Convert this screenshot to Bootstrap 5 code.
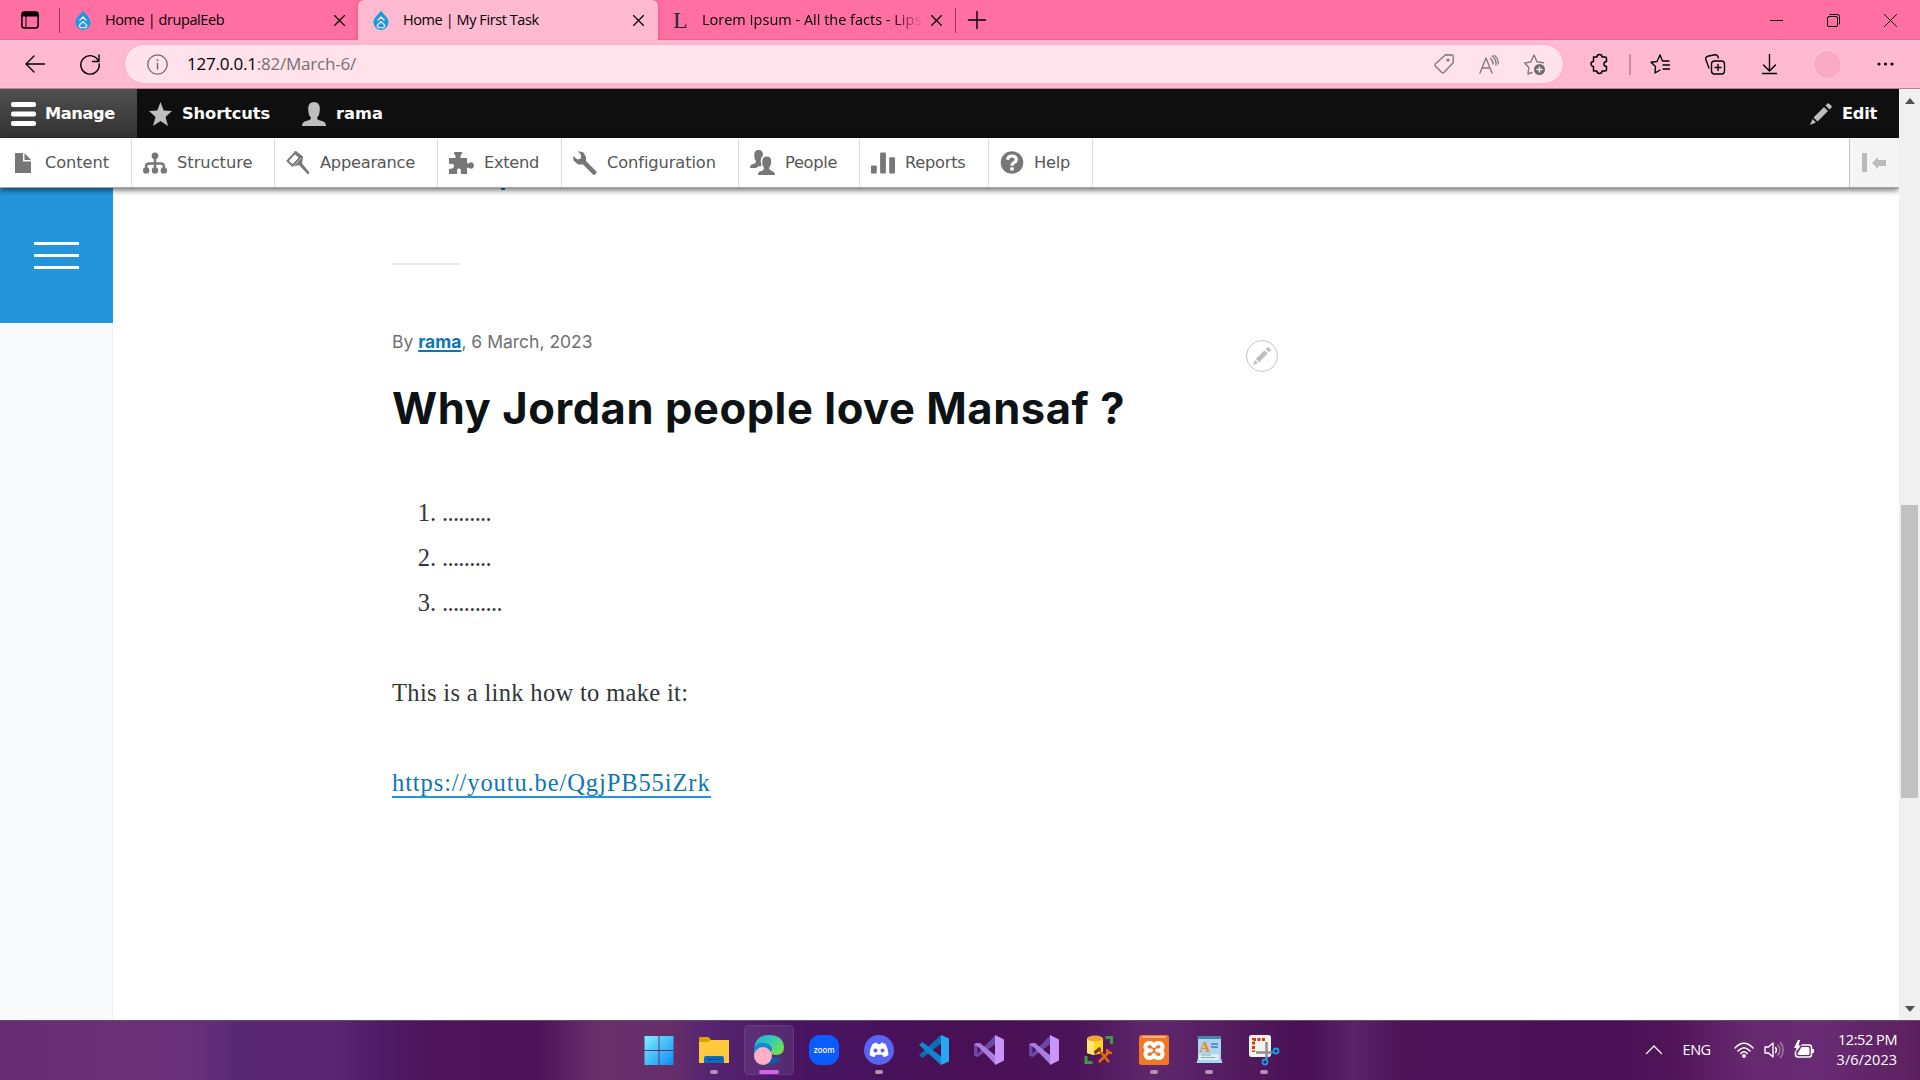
<!DOCTYPE html>
<html lang="en">
<head>
<meta charset="utf-8">
<title>Home | My First Task</title>
<link href="https://cdn.jsdelivr.net/npm/bootstrap@5.3.0/dist/css/bootstrap.min.css" rel="stylesheet">
<style>
html,body{height:1080px;overflow:hidden}
body{font-family:"Open Sans","Noto Sans",sans-serif;color:#000;background:#fff;width:1920px}
svg{display:block;flex:none;overflow:visible}
.ln{fill:none;stroke:currentColor;stroke-linecap:round;stroke-linejoin:round}
span,a{white-space:nowrap}
/* browser chrome */
.tabstrip{height:40px;background:#ff6fa1;font-size:14.5px}
.sq{box-shadow:inset 0 -1px 0 #ec6495}
.vsep{width:1px;height:25px;background:#8e3e5a}
.strip-start{width:59px;padding-left:21px}
.tab-a{width:299px;padding:0 13px 0 0;border-bottom-right-radius:6px}
.tab-a .vsep{margin-right:15px}
.tab-on{width:300px;height:41px;padding:0 14px 1px 15px;background:#ffbad1;border-radius:6px 6px 0 0;box-shadow:0 0 4px #b8385f88;clip-path:inset(0 -6px 1px -6px)}
.tab-c{width:297px;padding:0 13px 0 15px}
.tab-t{letter-spacing:-.42px;margin-left:14px}
.fade-end{width:221px;overflow:hidden;-webkit-mask-image:linear-gradient(90deg,#000 86%,transparent)}
.serif-l{font:24px/28px "Liberation Serif",serif;width:29px;color:#2b2b2b}
.winbtns{margin-left:auto;padding-right:23px;gap:44px}
.addressbar{height:49px;background:#ffbad1;border-bottom:1px solid #b98197;padding:0 26px 0 25px}
.pill{width:1439px;height:38px;border-radius:19px;background:#ffe2eb;padding:0 18px 0 22px;margin-left:25px;box-shadow:0 0 4px #f593b266}
.url{font-size:17px;color:#767074;letter-spacing:-.22px;margin-left:19px}
.url b{font-weight:400;color:#000}
.pill-icons{color:#84797e;gap:25px}
.bar-sep{width:2px;height:21px;background:#cd8ba2;margin:0 19px 0 21px}
.ms-27{margin-left:27px}.ms-35{margin-left:35px}.ms-37{margin-left:37px}
.avatar{width:29px;height:29px;border-radius:50%;background:#fbaac4;border:1px solid #ffc6d9;margin-left:36px}
/* viewport */
.viewport{height:931px}
.webpage{width:1899px;overflow:hidden}
.scroller{width:21px;background:#f0f0f0;padding:9px 0 8px}
.thumb{width:17px;height:293px;background:#c1c1c1;margin-top:401px}
.adminbar{height:49px;background:#0f0f0f;color:#fff;font:bold 16.25px/20px "DejaVu Sans",sans-serif;padding-right:22px}
.adm{height:49px;gap:10px;letter-spacing:-.1px}
.adm.on{width:137px;padding-left:11px;gap:9px;letter-spacing:-.39px;background:linear-gradient(#4f4f4f,#333);color:#fff}
.adm.short{margin-left:12px}
.adm.user{margin-left:32px;letter-spacing:0}
.tray{height:50px;background:#fff;border-bottom:1px solid #a5a5a5;box-shadow:0 2px 6px #0009;font:16.25px/20px "DejaVu Sans",sans-serif;color:#565656;position:relative;z-index:2}
.tray .it{height:49px;border-right:1px solid #ddd;gap:10px;padding-left:11px}
.tray svg,.adm svg{fill:#777}
.adm svg{fill:#bebebe}
.adm.on svg{fill:#fff}
.t1{letter-spacing:-.1px}.t2{letter-spacing:-.26px}.t3{letter-spacing:-.32px}
.tog{width:50px;height:49px;background:#f5f5f5;border-left:1px solid #c3c3c3;padding-left:12px}
.tray .tog svg{fill:#bbb}
.side{width:113px;background:#f7f9fa;border-right:1px solid #f0f3f5}
.burger{width:113px;height:135px;background:#2494db;gap:9px}
.burger i{width:45px;height:3px;background:#fff}
.art{padding-left:279px;width:1300px}
.cut{height:2px;width:4px;background:#0d77b5;margin-left:109px}
.rule{width:68px;height:2px;background:#e7ebef;margin-top:73px}
.by{font:17.5px/24px "Inter",sans-serif;color:#6e7172;margin-top:65px}
.by a{color:#0d77b5;font-weight:700;text-decoration-thickness:2px;text-underline-offset:2px}
.title{font:bold 43.5px/56px "Inter",sans-serif;color:#0d1214;margin:26px 0 0;letter-spacing:.56px}
.ctx{position:absolute;left:1133px;top:152px;width:32px;height:32px;border:1px solid #c6c6c6;border-radius:50%;background:#fff}
.prose{font:24.5px/45px "Liberation Serif",serif;color:#313637}
.prose ol{margin:54px 0 45px;padding-left:22px;list-style:none}
.prose ol li{gap:6px}
.dots{letter-spacing:-.68px}
.num{width:22px;text-align:right}
.prose p{margin-bottom:45px;letter-spacing:.33px}
.prose a{color:#0d77b5;text-decoration:none;border-bottom:2px solid #2494db;letter-spacing:.9px}
/* taskbar */
.taskbar{height:60px;border-top:1px solid #6a4770;color:#fff;background:linear-gradient(90deg,#662b70 0,#6b3077 7%,#68307a 10%,#592873 12.5%,#5b2772 17%,#4e1c66 20%,#4d155c 22%,#4d1257 28%,#692f6b 31%,#652e6b 35%,#552471 37%,#481462 42%,#480f54 50%,#4c1458 56%,#5f276c 60%,#521a5d 65%,#480f54 68%,#5a2468 70.5%,#4c1457 73%,#4a1058 84%,#501458 87%,#66286e 91%,#682a72 95%,#5c205f 100%);padding-right:23px}
.app{width:55px;height:59px;padding-top:14px;position:relative}
.app svg{width:30px;height:30px}
.app.run::after{content:"";position:absolute;bottom:6px;width:8px;height:4px;border-radius:2px;background:#b292b8}
.app.cur::before{content:"";position:absolute;left:3px;top:4px;width:50px;height:50px;border-radius:5px;background:#ffffff14;border:1px solid #ffffff14}
.app.cur::after{width:20px;background:#da62e4}
.apps{padding-left:631px}
.systray{padding-bottom:2px}
.lang{font-size:14.5px;letter-spacing:-.5px;margin:0 23px 0 21px}
.clock{font-size:14.5px;line-height:20px;text-align:right;margin-left:23px}
.time{letter-spacing:-.44px}
</style>
<script src="https://cdn.jsdelivr.net/npm/bootstrap@5.3.0/dist/js/bootstrap.bundle.min.js"></script>
</head>
<body>
<svg width="0" height="0" class="position-absolute">
<symbol id="drop" viewBox="0 0 16 20"><path fill="#0f9ee0" d="M8 0C8.300 3 15.500 6.500 15.500 12.500A7.500 7.500 0 0 1 .5 12.500C.5 6.500 7.700 3 8 0z"/><path d="M4.500 10.500 8 7l3.500 3.500M8 11.500l-3 3a1.900 1.900 0 0 0 2.700 2.700M8 11.500l3 3a1.900 1.900 0 0 1-2.700 2.700" fill="none" stroke="#ffd0e0" stroke-width="1.500"/></symbol>
<symbol id="pencil" viewBox="0 0 22 22"><path d="M15.500 2.500 17.300.7q1-1 2 0l2 2q1 1 0 2L19.500 6.500zM14 4l4 4L7.500 18.500l-4-4zM2.500 16l3.500 3.500L0 22z"/></symbol>
<symbol id="cross" viewBox="0 0 11 11"><path class="ln" stroke-width="1.300" d="M.5.5l10 10M10.500.5l-10 10"/></symbol>
<symbol id="vs" viewBox="0 0 30 30"><path fill="#6c47a6" d="M0 9.500 3.500 8v14L0 20.500z"/><path fill="#6a46a5" d="M21.500 0 2 20v1.500L4 22l17.500-13z"/><path fill="#a87de0" d="M0 9.500 3.500 8 22 30l-1-9z"/><path fill="#a87de0" d="M1 8.500 6 8l16 13v9z"/><path fill="#c995fb" d="M21 0l9 4.500v21L21 30z"/></symbol>
</svg>

<!-- tab strip -->
<div class="tabstrip d-flex align-items-stretch">
  <div class="sq strip-start d-flex align-items-center"><svg width="18" height="18" viewBox="0 0 18 18"><rect x=".9" y=".9" width="16.200" height="16.200" rx="2.500" class="ln" stroke-width="1.500"/><path d="M1 1h16v4.500H1z"/><path class="ln" d="M5 5v12"/></svg></div>
  <div class="d-flex align-items-center sq tab-a"><div class="vsep"></div><svg width="16" height="20"><use href="#drop"/></svg><span class="tab-t">Home | drupalEeb</span><svg class="ms-auto" width="11" height="11"><use href="#cross"/></svg></div>
  <div class="d-flex align-items-center tab-on"><svg width="16" height="20"><use href="#drop"/></svg><span class="tab-t">Home | My First Task</span><svg class="ms-auto" width="11" height="11"><use href="#cross"/></svg></div>
  <div class="d-flex align-items-center sq tab-c"><span class="serif-l">L</span><div class="fade-end"><span>Lorem Ipsum - All the facts - Lips</span></div><svg class="ms-2" width="11" height="11"><use href="#cross"/></svg></div>
  <div class="d-flex align-items-center sq flex-grow-1 gap-2"><div class="vsep"></div><svg class="ms-1" width="18" height="18" viewBox="0 0 18 18"><path class="ln" stroke-width="1.400" d="M9 .5v17M.5 9h17"/></svg>
    <div class="winbtns d-flex align-items-center"><svg width="13" height="13" viewBox="0 0 13 13"><path d="M0 6h13v1H0z"/></svg><svg width="13" height="13" viewBox="0 0 13 13"><rect class="ln" x=".5" y="2.500" width="10" height="10" rx="1.500"/><path class="ln" d="M3 .5h7.500a2 2 0 0 1 2 2V10"/></svg><svg width="13" height="13" viewBox="0 0 13 13"><path class="ln" d="M.5.5l12 12M12.500.5l-12 12"/></svg></div>
  </div>
</div>
<!-- address bar -->
<div class="addressbar d-flex align-items-center">
  <svg width="20" height="18" viewBox="0 0 20 18"><path class="ln" stroke-width="1.400" d="M19.500 9H1M9 1 1 9l8 8"/></svg>
  <svg class="ms-35" width="20" height="20" viewBox="0 0 20 20"><path class="ln" stroke-width="1.400" d="M18.600 7.500A9.200 9.200 0 1 0 19.200 10M19 1v6.500h-6.500"/></svg>
  <div class="pill d-flex align-items-center">
    <svg width="21" height="21" viewBox="0 0 21 21" color="#716a6d"><circle class="ln" stroke-width="1.300" cx="10.500" cy="10.500" r="9.700"/><path class="ln" stroke-width="1.400" d="M10.500 9.500v5.500"/><circle cx="10.500" cy="6.300" r="1" fill="#716a6d"/></svg>
    <span class="url"><b>127.0.0.1</b>:82/March-6/</span>
    <div class="ms-auto d-flex align-items-center pill-icons">
      <svg width="20" height="20" viewBox="0 0 20 20"><path class="ln" stroke-width="1.400" d="M11.500.8 18 1q1.200 0 1.200 1.200v6.500L9.800 18.500q-1 1-2 0L1.300 12q-1-1 0-2z"/><circle cx="14" cy="6" r="1.600" fill="#84797e"/></svg>
      <svg width="20" height="19" viewBox="0 0 20 19"><path class="ln" stroke-width="1.400" d="M1 18 7 3l6 15M3 13h8M11.500 3.500Q14 5.500 14 9M13 1q4.500 3 4 9"/><path class="ln" stroke-width="1.200" d="M15 .3Q19.500 3 19.300 9"/></svg>
      <svg width="21" height="21" viewBox="0 0 21 21"><path class="ln" stroke-width="1.400" d="M8 18.500 4 20l.8-6.500L.8 9l6-1L10 1l3 6.800 6.500 1"/><circle cx="15.500" cy="15.500" r="5.500" fill="#716a6d"/><path stroke="#fff" stroke-width="1.300" d="M12.500 15.500h6M15.500 12.500v6"/></svg>
    </div>
  </div>
  <svg class="ms-27" width="18" height="20" viewBox="0 0 18 20"><path class="ln" stroke-width="1.500" d="M3.500 3H7a2.500 2.500 0 0 1 5 0h3q1.500 0 1.500 1.500v3a2.500 2.500 0 0 0 0 5v3q0 1.500-1.500 1.500h-3a2.500 2.500 0 0 1-5 0H3.500v-4.500a2.500 2.500 0 0 1 0-5z"/></svg>
  <div class="bar-sep"></div>
  <svg width="20" height="20" viewBox="0 0 20 20"><path class="ln" stroke-width="1.400" d="M10 16 5 19l.5-6.500L1 8.300l6-.8L10 1l2.500 6H19M13 11h6.500M13 15h6.500"/></svg>
  <svg class="ms-35" width="20" height="21" viewBox="0 0 20 21"><rect class="ln" stroke-width="1.400" x="6.500" y="7" width="13" height="13" rx="3"/><path class="ln" stroke-width="1.400" d="M4 14 .8 5.500Q.3 3 2.500 2.300L10 .8q2.500-.3 3 2l.3 1M13 10.500v6M10 13.500h6"/></svg>
  <svg class="ms-37" width="15" height="20" viewBox="0 0 15 20"><path class="ln" stroke-width="1.400" d="M7.500.5v16M1.500 11l6 6 6-6M.5 19.500h14"/></svg>
  <div class="avatar"></div>
  <svg class="ms-35" width="17" height="4" viewBox="0 0 17 4"><circle cx="2" cy="2" r="1.600"/><circle cx="8.500" cy="2" r="1.600"/><circle cx="15" cy="2" r="1.600"/></svg>
</div>

<div class="viewport d-flex">
  <div class="webpage d-flex flex-column">
    <!-- admin toolbar -->
    <div class="adminbar d-flex align-items-center">
      <div class="adm on d-flex align-items-center"><svg width="25" height="24"><rect width="25" height="5" rx="2"/><rect y="9.500" width="25" height="5" rx="2"/><rect y="19" width="25" height="5" rx="2"/></svg><span>Manage</span></div>
      <div class="adm short d-flex align-items-center"><svg width="23" height="24" viewBox="0 0 23 24"><path d="M11.500 0 14.700 8.500 23 9l-6.500 6 2.500 9-7.500-5L4 24l2.500-9L0 9l8.300-.5z"/></svg><span>Shortcuts</span></div>
      <div class="adm user d-flex align-items-center"><svg width="24" height="24" viewBox="0 0 24 24"><path d="M0 24q0-4 4-5 5-1 5-3-3-3-2.800-10Q6.500 0 12 0t5.800 6Q18 13 15 16q0 2 5 3 4 1 4 5z"/></svg><span>rama</span></div>
      <div class="adm d-flex align-items-center ms-auto"><svg width="22" height="22"><use href="#pencil"/></svg><span class="t2">Edit</span></div>
    </div>
    <div class="tray d-flex">
      <div class="it d-flex align-items-center" style="width:132px"><svg class="ms-1 me-1" width="16" height="20" viewBox="0 0 16 20"><path d="M0 0h8v8.500h8V20H0zM9.500 0 16 7H9.500z"/></svg><span class="t1">Content</span></div>
      <div class="it d-flex align-items-center" style="width:143px"><svg width="24" height="22" viewBox="0 0 25 22"><circle cx="12.500" cy="3.500" r="3.500"/><circle cx="3.300" cy="18.700" r="3.300"/><circle cx="12.500" cy="18.700" r="3.300"/><circle cx="21.700" cy="18.700" r="3.300"/><path fill="none" stroke="#777" stroke-width="2.500" d="M12.500 5v14M3.300 18v-3.500q0-3 3-3h12.400q3 0 3 3V18"/></svg><span>Structure</span></div>
      <div class="it d-flex align-items-center" style="width:163px"><svg width="24" height="24" viewBox="0 0 24 24"><path fill="none" stroke="#777" stroke-width="2" d="M9 2 1.500 10l5 4.500L14 6.500z"/><path d="M8 .5 15.500 7l-5 5.500-3 3L13 14l9 9.500 1.500-2-7.500-9 1-7L10 0z"/><path fill="#fff" d="M8.500 4 12 7.200 7.500 12 4 8.800z"/></svg><span class="t2">Appearance</span></div>
      <div class="it d-flex align-items-center" style="width:124px"><svg width="25" height="22" viewBox="0 0 25 22"><path d="M5 0h8q.5 2-1.500 3.500V6H18v4.500q1 1.500 2 .5 4-2.500 5 2.500-1 5-5 2.500-1-1-2 .5V22h-6q-.5-3 0-4-2-3.500-4 0 .5 1 0 4H0v-5q5 0 5-3t-5-2V6h6.500V3.500Q4.500 2 5 0z"/></svg><span class="t3">Extend</span></div>
      <div class="it d-flex align-items-center" style="width:177px"><svg width="24" height="24" viewBox="0 0 24 24"><path d="M5 0 10.500 1.500 13 6v4L23.500 20.500q.5 3-3 3.500L10 13.500H5L.5 9.500 0 5l4.500 3.500L8 7.500V4z"/></svg><span class="t1">Configuration</span></div>
      <div class="it d-flex align-items-center" style="width:121px"><svg width="25" height="25" viewBox="0 0 25 25"><path d="M0 18q0-3.500 3-4t3-3Q4 9 4.200 5q0-5 4.500-5T13 5.500Q10 8 11 13q1 2 0 3-4 0-4.500 2z"/><path d="M8 25q0-3.500 3-4t3-3q-2-2.500-1.800-6.500 0-5 4.500-5t4.500 5Q21.400 15.500 19 18q0 2 3 3t3 4z"/></svg><span class="t3">People</span></div>
      <div class="it d-flex align-items-center" style="width:129px"><svg width="24" height="22" viewBox="0 0 25 22"><rect y="13.500" width="6" height="8.500" rx="1"/><rect x="9.500" width="6" height="22" rx="1"/><rect x="19" y="5" width="6" height="17" rx="1"/></svg><span class="t2">Reports</span></div>
      <div class="it d-flex align-items-center" style="width:104px"><svg width="24" height="23" viewBox="0 0 23 23"><circle cx="11.500" cy="11.500" r="11.300"/><path fill="none" stroke="#fff" stroke-width="3.200" d="M7 8.800Q7.500 5 11.500 5t4.300 3.500q0 2-2.300 3.200-2 1-2 3"/><rect x="9.800" y="16.300" width="3.400" height="3.200" fill="#fff"/></svg><span class="t2">Help</span></div>
      <div class="tog ms-auto d-flex align-items-center"><svg width="24" height="19" viewBox="0 0 24 19"><rect width="5" height="19"/><path d="M10 10l6-6v3h8v6h-8v3z"/></svg></div>
    </div>
    <div class="d-flex flex-grow-1">
      <div class="side"><div class="burger d-flex flex-column align-items-center justify-content-center"><i></i><i></i><i></i></div></div>
      <div class="art position-relative">
        <div class="cut"></div>
        <div class="rule"></div>
        <div class="by">By <a href="#">rama</a>, 6 March, 2023</div>
        <h2 class="title">Why Jordan people love Mansaf ?</h2>
        <div class="ctx d-flex align-items-center justify-content-center"><svg width="18" height="18" fill="#bebebe"><use href="#pencil"/></svg></div>
        <div class="prose">
          <ol>
            <li class="d-flex"><span class="num">1.</span><span class="dots">.........</span></li>
            <li class="d-flex"><span class="num">2.</span><span class="dots">.........</span></li>
            <li class="d-flex"><span class="num">3.</span><span class="dots">...........</span></li>
          </ol>
          <p>This is a link how to make it:</p>
          <p><a href="#">https://youtu.be/QgjPB55iZrk</a></p>
        </div>
      </div>
    </div>
  </div>
  <div class="scroller d-flex flex-column align-items-center">
    <svg width="10" height="6" viewBox="0 0 10 6" fill="#505050"><path d="M0 6 5 0l5 6z"/></svg>
    <div class="thumb"></div>
    <svg class="mt-auto" width="10" height="6" viewBox="0 0 10 6" fill="#505050"><path d="M0 0h10L5 6z"/></svg>
  </div>
</div>

<!-- taskbar -->
<div class="taskbar d-flex">
  <div class="apps d-flex">
    <div class="app d-flex justify-content-center"><svg viewBox="0 0 30 30"><defs><linearGradient id="w" x2="1" y2="1"><stop stop-color="#7ff0ff"/><stop offset="1" stop-color="#0a8cf5"/></linearGradient></defs><path fill="url(#w)" d="M.5 1h14v14H.5zM15.500 1h14v14h-14zM.5 16h14v14H.5zM15.500 16h14v14h-14z"/></svg></div>
    <div class="app run d-flex justify-content-center"><svg viewBox="0 0 30 30"><path fill="#e0a100" d="M0 3q0-1 1-1h8q1 0 1.500 1L12 5v4H0z"/><path fill="#ffcb3e" d="M0 7h9l3-2h18v23H0z"/><path fill="#0f6cbd" d="M5 28v-5q0-2 2-2h16q2 0 2 2v5z"/><path stroke="#0a4a8c" d="M9 24.500h13"/></svg></div>
    <div class="app run cur d-flex justify-content-center"><svg class="position-relative" viewBox="0 0 30 30"><defs><linearGradient id="e" x2="1" y2=".6"><stop stop-color="#28a9d8"/><stop offset=".5" stop-color="#32c8c0"/><stop offset="1" stop-color="#6fe050"/></linearGradient></defs><path fill="#0f5aa6" d="M8 13q5 12 20 9-5 8-14 8z"/><path fill="url(#e)" d="M0 13Q2 0 15 0q14 0 15 12 0 8-8 8-6 0-5-4 2-6-7-8Q3 8 0 13z"/><path fill="#0f8bd0" d="M0 13q4-6 10-5 8 1 8 7l-8-1-10 6z"/><circle cx="9" cy="21" r="9" fill="#fbb0c8"/></svg></div>
    <div class="app d-flex justify-content-center"><svg viewBox="0 0 30 30"><rect width="30" height="30" rx="11" fill="#0b5cff"/><text x="15" y="17.500" text-anchor="middle" font-family="Inter,sans-serif" font-size="8.500" font-weight="500" fill="#fff" textLength="21" lengthAdjust="spacingAndGlyphs">zoom</text></svg></div>
    <div class="app run d-flex justify-content-center"><svg viewBox="0 0 30 30"><circle cx="15" cy="15" r="15" fill="#5865f2"/><path fill="#fff" d="M8.500 9q3-1.500 4.500-1.500L13.500 9h3l.5-1.500q2 0 4.500 1.500 3 5 3 11-2.500 1.800-5 2l-1.300-2.200h-6.400L10.500 22q-2.500-.2-5-2 0-6 3-11z"/><circle cx="11.500" cy="15.500" r="2" fill="#5865f2"/><circle cx="18.500" cy="15.500" r="2" fill="#5865f2"/></svg></div>
    <div class="app d-flex justify-content-center"><svg viewBox="0 0 30 30"><path fill="#0a6fb5" d="M0 20 22 0v8.500L3.500 23z"/><path fill="#1186cc" d="M0 10 3.500 7 22 21.500V30z"/><path fill="#27a7f0" d="M22 0l8 3.500v23L22 30z"/></svg></div>
    <div class="app d-flex justify-content-center"><svg><use href="#vs"/></svg></div>
    <div class="app d-flex justify-content-center"><svg><use href="#vs"/></svg></div>
    <div class="app d-flex justify-content-center"><svg viewBox="0 0 30 30"><path fill="#ffd51f" d="M3 3v15q8 4 16-1V3z"/><path fill="#ffe675" d="M3 3v15l7 2V4z"/><ellipse cx="11" cy="3.500" rx="8" ry="3" fill="#f0a53c"/><path fill="none" stroke="#3d9b45" stroke-width="3" d="M21.500 2.500h6V9M2 21v6.500h6.500"/><path stroke="#e8650c" stroke-width="2.600" d="M15 15l10 12M26 16 15 27"/><path stroke="#7c3a12" stroke-width="3" d="m10.500 18 6-5"/><path fill="none" stroke="#e8650c" stroke-width="2" d="M23 14v4h5"/></svg></div>
    <div class="app run d-flex justify-content-center"><svg viewBox="0 0 30 30"><rect width="30" height="30" rx="2.500" fill="#f37623"/><rect x="3" y="1" width="24" height="2" rx="1" fill="#ffb07a"/><path fill="none" stroke="#fff" stroke-width="4" stroke-linejoin="round" stroke-linecap="round" d="M12 15.500H9.500Q6 14 6.500 11q1-3.500 5-3 2 .5 3.500 3 1.500-2.500 3.500-3 4-.5 5 3 .5 3-3 4.500H18h2.500q3.500 1 3 4.500-1 3.500-5 3-2-.5-3.500-3-1.500 2.500-3.500 3-4 .5-5-3-.5-3.500 3-4.500"/></svg></div>
    <div class="app run d-flex justify-content-center"><svg viewBox="0 0 30 30"><path fill="#a9d5ee" d="M4 1h23v22l1.500 5H2.500L4 23z"/><path fill="#3f88ad" d="M3.500 1h23.500v3H3.500z"/><path fill="#dcecf6" d="M5 19h20v6H5z"/><text x="5.500" y="17" font-family="Liberation Serif,serif" font-weight="700" font-size="15" fill="#f08a24">A</text><path stroke="#3b7fd0" stroke-width="1.400" d="M17 9h7M17 12h7"/><path stroke="#8aa" d="M7 20h10M7 22.500h14"/></svg></div>
    <div class="app run d-flex justify-content-center"><svg viewBox="0 0 30 30"><rect width="22" height="22" rx="2.500" fill="#f3f3f3"/><path fill="none" stroke="#d83b01" stroke-width="3" stroke-dasharray="3 1.500" d="M16 4.500H4.500V17"/><path stroke="#8f8f8f" stroke-width="2.500" d="M17.500 7v16M7 17.500h16"/><circle cx="27" cy="16" r="2.500" fill="none" stroke="#1c9be8" stroke-width="1.800"/><circle cx="16" cy="27" r="2.500" fill="none" stroke="#1c9be8" stroke-width="1.800"/><path stroke="#1c9be8" stroke-width="1.800" d="m21.500 18.500 3-1.500M18.500 21.500 17 24.500"/></svg></div>
  </div>
  <div class="systray ms-auto d-flex align-items-center">
    <svg width="16" height="9" viewBox="0 0 16 9"><path class="ln" stroke-width="1.300" d="M.5 8.500 8 1l7.500 7.500"/></svg>
    <span class="lang">ENG</span>
    <div class="d-flex align-items-center" style="gap:10px">
    <svg width="20" height="16" viewBox="0 0 20 16"><path class="ln" stroke-width="1.600" d="M1 6q9-9.500 18 0M4 9q6-6.500 12 0M6.800 11.500q3.200-3.500 6.400 0"/><circle cx="10" cy="14" r="1.900" fill="#fff"/></svg>
    <svg width="20" height="18" viewBox="0 0 20 18"><path class="ln" stroke-width="1.400" d="M1 6h3.500L9 2v14l-4.500-4H1zM11.500 6.500q2 2.500 0 5"/><path class="ln" stroke-width="1.400" opacity=".4" d="M14 4q4 5 0 10M16.500 1.500q5.500 7.500 0 15"/></svg>
    <svg width="20" height="18" viewBox="0 0 20 18"><path class="ln" stroke-width="1.500" d="M8 4h7q2.500 0 2.500 2.500v7q0 2.500-2.500 2.500H4q-2.500 0-2.500-2.500V11"/><path fill="#fff" d="M7.500 6H14q1.500 0 1.500 1.500v5Q15.500 14 14 14H5q-1.500 0-1.500-1.500zM18 8h2v4h-2zM4-1 0 7h2.500L1 12l6-7.500H4.500L6-1z"/></svg>
    </div>
    <div class="clock"><span class="d-block time">12:52 PM</span><span class="d-block">3/6/2023</span></div>
  </div>
</div>
</body>
</html>
